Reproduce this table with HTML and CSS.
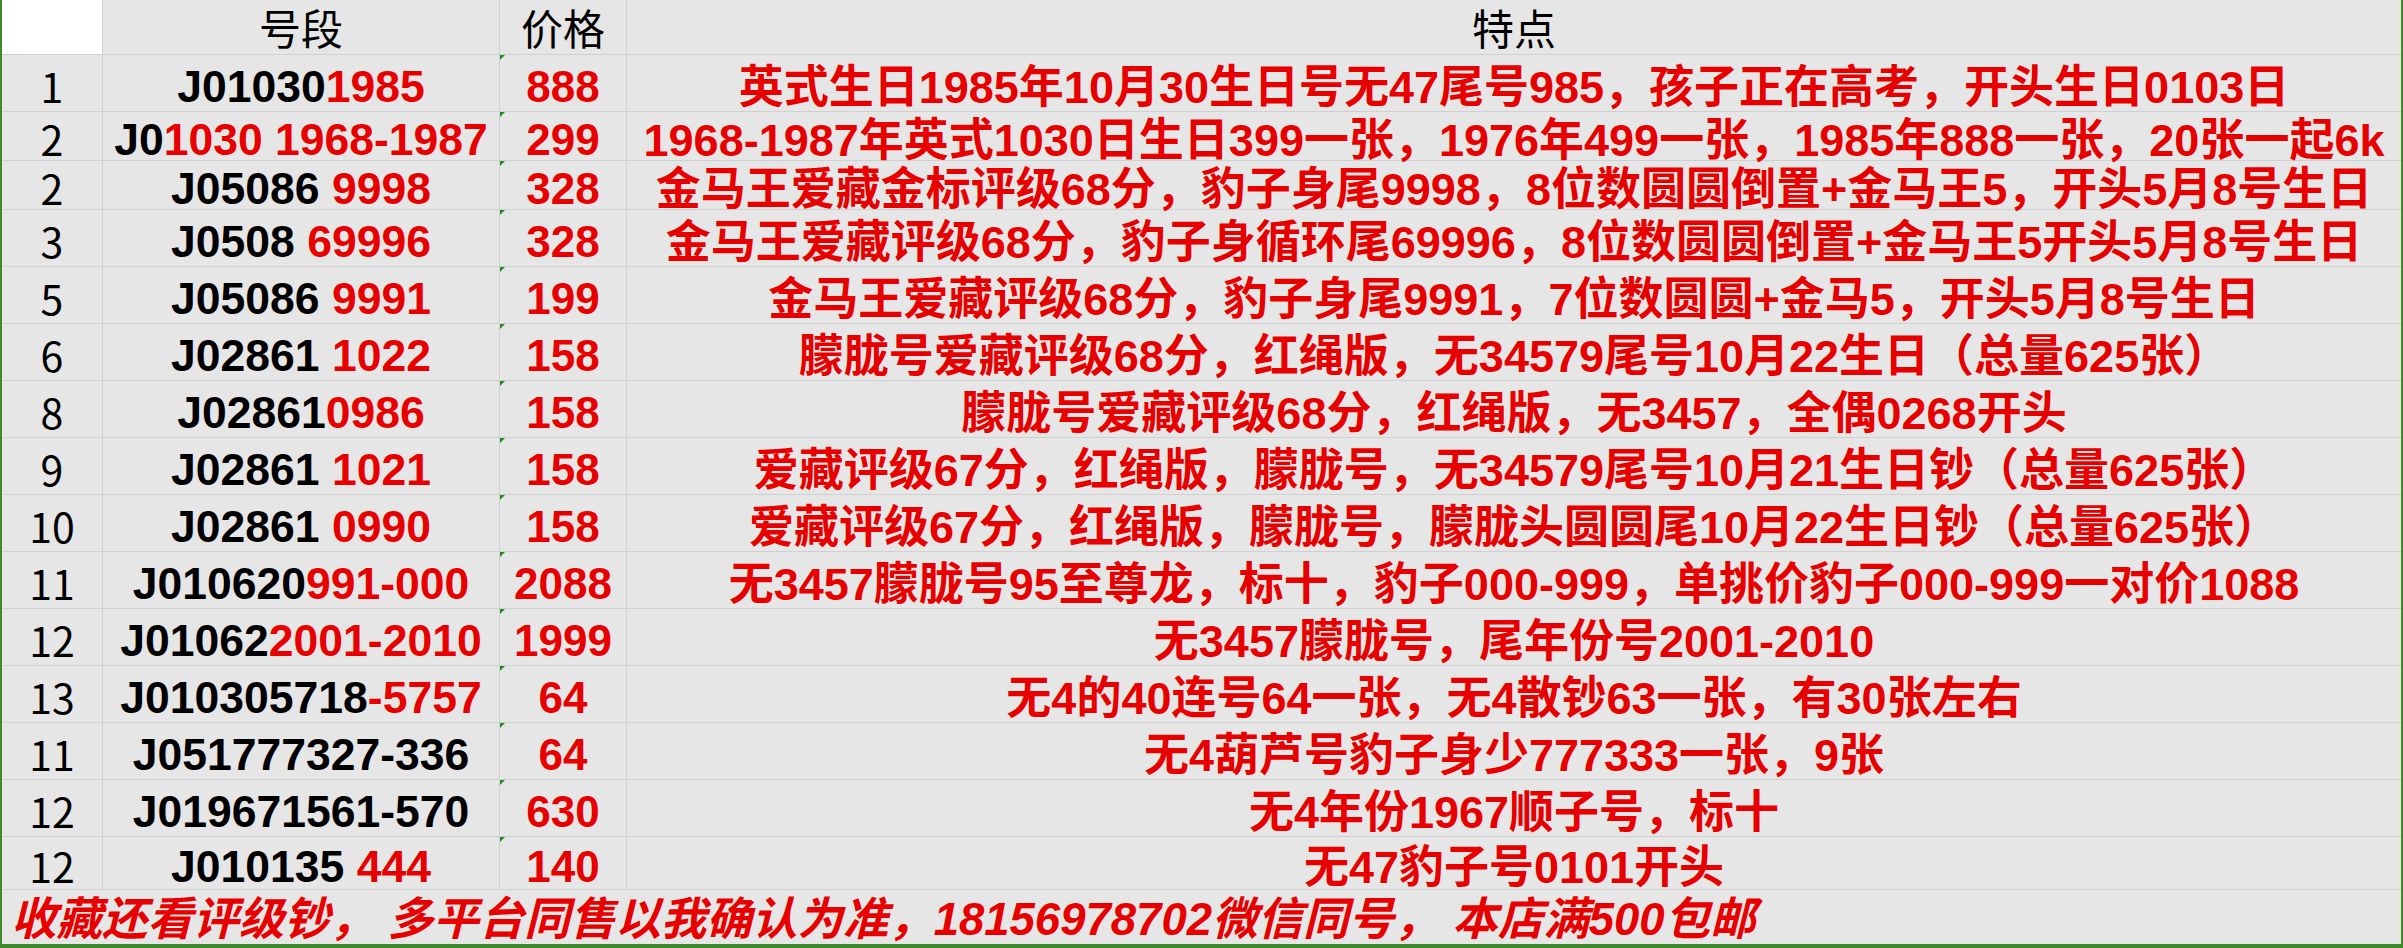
FILE: index.html
```html
<!DOCTYPE html>
<html lang="zh-CN">
<head>
<meta charset="utf-8">
<title>号段价格表</title>
<link rel="stylesheet" href="styles.css">
</head>
<body>
<div class="sheet">
  <div class="cell corner"></div>
  <div class="cell head">号段</div>
  <div class="cell head">价格</div>
  <div class="cell head last">特点</div>

  <div class="cell num">1</div>
  <div class="cell code"><span>J01030<span class="red">1985</span></span></div>
  <div class="cell price">888</div>
  <div class="cell desc">英式生日1985年10月30生日号无47尾号985，孩子正在高考，开头生日0103日</div>

  <div class="cell num">2</div>
  <div class="cell code"><span>J0<span class="red">1030 1968-1987</span></span></div>
  <div class="cell price">299</div>
  <div class="cell desc">1968-1987年英式1030日生日399一张，1976年499一张，1985年888一张，20张一起6k</div>

  <div class="cell num">2</div>
  <div class="cell code"><span>J05086 <span class="red">9998</span></span></div>
  <div class="cell price">328</div>
  <div class="cell desc">金马王爱藏金标评级68分，豹子身尾9998，8位数圆圆倒置+金马王5，开头5月8号生日</div>

  <div class="cell num">3</div>
  <div class="cell code"><span>J0508 <span class="red">69996</span></span></div>
  <div class="cell price">328</div>
  <div class="cell desc">金马王爱藏评级68分，豹子身循环尾69996，8位数圆圆倒置+金马王5开头5月8号生日</div>

  <div class="cell num">5</div>
  <div class="cell code"><span>J05086 <span class="red">9991</span></span></div>
  <div class="cell price">199</div>
  <div class="cell desc">金马王爱藏评级68分，豹子身尾9991，7位数圆圆+金马5，开头5月8号生日</div>

  <div class="cell num">6</div>
  <div class="cell code"><span>J02861 <span class="red">1022</span></span></div>
  <div class="cell price">158</div>
  <div class="cell desc">朦胧号爱藏评级68分，红绳版，无34579尾号10月22生日（总量625张）</div>

  <div class="cell num">8</div>
  <div class="cell code"><span>J02861<span class="red">0986</span></span></div>
  <div class="cell price">158</div>
  <div class="cell desc">朦胧号爱藏评级68分，红绳版，无3457，全偶0268开头</div>

  <div class="cell num">9</div>
  <div class="cell code"><span>J02861 <span class="red">1021</span></span></div>
  <div class="cell price">158</div>
  <div class="cell desc">爱藏评级67分，红绳版，朦胧号，无34579尾号10月21生日钞（总量625张）</div>

  <div class="cell num">10</div>
  <div class="cell code"><span>J02861 <span class="red">0990</span></span></div>
  <div class="cell price">158</div>
  <div class="cell desc">爱藏评级67分，红绳版，朦胧号，朦胧头圆圆尾10月22生日钞（总量625张）</div>

  <div class="cell num">11</div>
  <div class="cell code"><span>J010620<span class="red">991-000</span></span></div>
  <div class="cell price">2088</div>
  <div class="cell desc">无3457朦胧号95至尊龙，标十，豹子000-999，单挑价豹子000-999一对价1088</div>

  <div class="cell num">12</div>
  <div class="cell code"><span>J01062<span class="red">2001-2010</span></span></div>
  <div class="cell price">1999</div>
  <div class="cell desc">无3457朦胧号，尾年份号2001-2010</div>

  <div class="cell num">13</div>
  <div class="cell code"><span>J010305718<span class="red">-5757</span></span></div>
  <div class="cell price">64</div>
  <div class="cell desc">无4的40连号64一张，无4散钞63一张，有30张左右</div>

  <div class="cell num">11</div>
  <div class="cell code"><span>J051777327-336</span></div>
  <div class="cell price">64</div>
  <div class="cell desc">无4葫芦号豹子身少777333一张，9张</div>

  <div class="cell num">12</div>
  <div class="cell code"><span>J019671561-570</span></div>
  <div class="cell price">630</div>
  <div class="cell desc">无4年份1967顺子号，标十</div>

  <div class="cell num">12</div>
  <div class="cell code"><span>J010135 <span class="red">444</span></span></div>
  <div class="cell price">140</div>
  <div class="cell desc">无47豹子号0101开头</div>

  <div class="cell footer">收藏还看评级钞，&nbsp;多平台同售以我确认为准，18156978702微信同号，&nbsp;本店满500包邮</div>
</div>
</body>
</html>
```

FILE: styles.css
```css
html, body {
  margin: 0;
  padding: 0;
  background: #ffffff;
}

.sheet {
  width: 2403px;
  height: 948px;
  box-sizing: border-box;
  border-left: 2px solid #3d8b2b;
  border-right: 2px solid #3d8b2b;
  border-bottom: 4px solid #3d8b2b;
  background: #e6e6e6;
  display: grid;
  grid-template-columns: 101px 397px 127px 1fr;
  grid-template-rows: 55px 57px 49px 49px repeat(11, 57px) 53px 54px;
  overflow: hidden;
}

.cell {
  box-sizing: border-box;
  border-right: 1px solid #d0d0d0;
  border-bottom: 1px solid #d0d0d0;
  display: flex;
  align-items: center;
  justify-content: center;
  white-space: nowrap;
  line-height: 1;
  min-width: 0;
}

.corner {
  background: #ffffff;
}

.head {
  font-family: "Noto Sans CJK SC", "Liberation Sans", sans-serif;
  font-size: 42px;
  font-weight: 400;
  line-height: 1.2;
  color: #000000;
}

.last,
.desc {
  border-right: none;
}

.num {
  font-family: "Noto Sans CJK SC", "Liberation Sans", sans-serif;
  font-size: 41px;
  font-weight: 400;
  color: #000000;
  padding-top: 4px;
}

.code,
.price,
.desc {
  font-family: "Liberation Sans", "Noto Sans CJK SC", sans-serif;
  font-size: 44px;
  font-weight: 700;
  padding-top: 8px;
}

.code {
  color: #000000;
  white-space: pre;
  font-size: 44.5px;
}

.desc {
  font-size: 45px;
}

.red,
.price,
.desc {
  color: #e60000;
}

.price {
  position: relative;
}

.price::before {
  content: "";
  position: absolute;
  top: 0;
  left: 0;
  width: 0;
  height: 0;
  border-top: 5px solid #1f8a1f;
  border-right: 5px solid transparent;
}

.footer {
  grid-column: 1 / -1;
  border-right: none;
  border-bottom: none;
  justify-content: flex-start;
  padding-left: 9px;
  padding-top: 6px;
  font-family: "Liberation Sans", "Noto Sans CJK SC", sans-serif;
  font-size: 45.5px;
  font-weight: 700;
  font-style: italic;
  color: #e60000;
}
```
